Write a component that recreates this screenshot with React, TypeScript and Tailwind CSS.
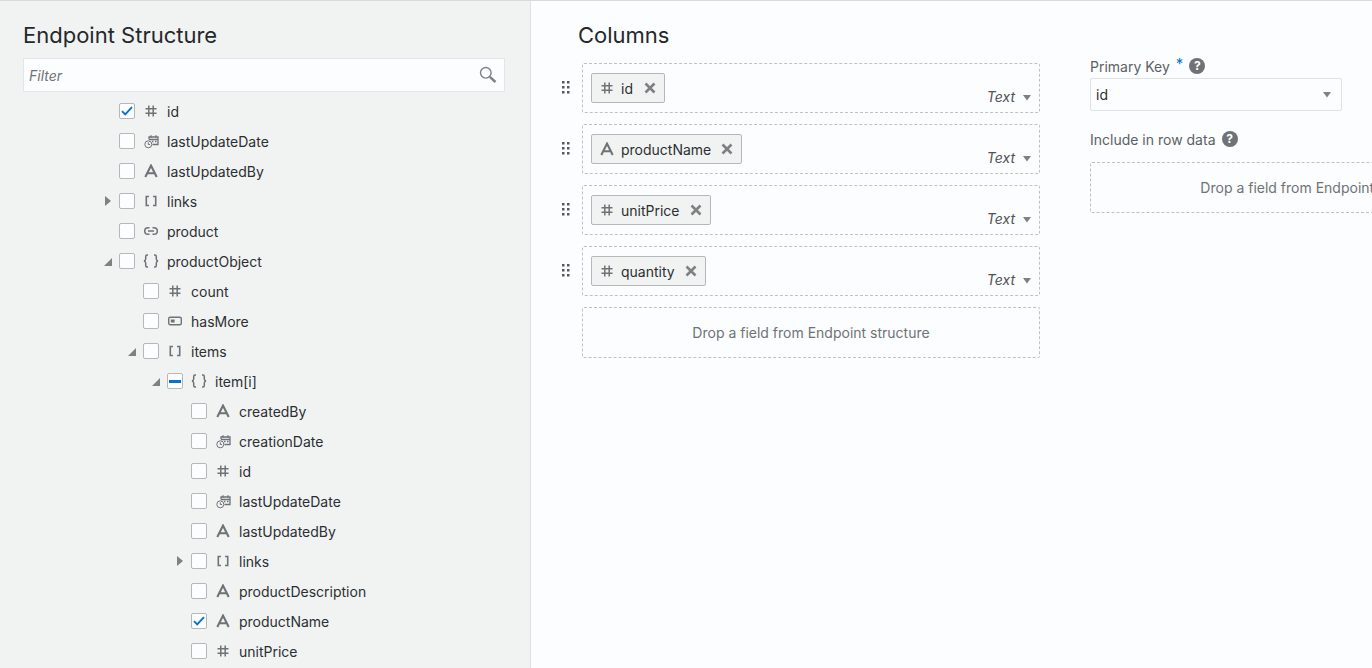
import React from "react";

type Kind = "hash" | "date" | "text" | "array" | "link" | "object" | "bool";

function FieldIcon({ kind }: { kind: Kind }) {
  const c = "#6f7376";
  if (kind === "hash")
    return (
      <svg width="14" height="14" viewBox="0 0 14 14" fill="none" stroke={c} strokeWidth="1.5">
        <path d="M4.8 1.5v11M9.2 1.5v11M1.5 4.8h11M1.5 9.2h11" />
      </svg>
    );
  if (kind === "text")
    return (
      <svg width="14" height="14" viewBox="0 0 14 14" fill="none" stroke={c} strokeWidth="2.1">
        <path d="M1.3 13 7 1.6 12.7 13M3.4 9.3h7.2" />
      </svg>
    );
  if (kind === "array")
    return (
      <svg width="14" height="14" viewBox="0 0 14 14" fill="none" stroke={c} strokeWidth="1.6">
        <path d="M5 2.5H2.3v9H5M9 2.5h2.7v9H9" />
      </svg>
    );
  if (kind === "object")
    return (
      <svg width="16" height="14" viewBox="0 0 16 14" fill="none" stroke={c} strokeWidth="1.5">
        <path d="M5 1H4C3 1 2.7 1.700 2.7 2.500V5C2.700 6 2 6.800 1 7c1 .2 1.700 1 1.700 2v2.500C2.700 12.300 3 13 4 13h1M11 1h1c1 0 1.300.7 1.300 1.500V5c0 1 .7 1.800 1.700 2-1 .2-1.700 1-1.700 2v2.500c0 .8-.3 1.500-1.300 1.500h-1" />
      </svg>
    );
  if (kind === "link")
    return (
      <svg width="14" height="14" viewBox="0 0 14 14" fill="none" stroke={c} strokeWidth="1.5">
        <path d="M5.500 3.700H4a3.300 3.300 0 0 0 0 6.600h1.500M8.500 3.700H10a3.300 3.300 0 0 1 0 6.600H8.500M4 7h6" />
      </svg>
    );
  if (kind === "bool")
    return (
      <svg width="14" height="14" viewBox="0 0 14 14" fill="none">
        <rect x="0.700" y="3.200" width="12.600" height="7.600" rx="1.500" stroke={c} strokeWidth="1.400" />
        <rect x="2.800" y="5.500" width="3.800" height="3" fill={c} />
      </svg>
    );
  return (
    <svg width="15" height="15" viewBox="0 0 15 15" fill="none" stroke={c} strokeWidth="1">
      <circle cx="4.300" cy="10.300" r="3.500" />
      <path d="M4.300 8.300v2.200h1.700" />
      <path d="M5 5.200V3h9v7.500H8.500M5 5.500h9" strokeWidth="1.300" />
      <path d="M7 1.200v2.300M12 1.200v2.300M8 7.500h1.500M11 7.500h1.500" strokeWidth="1.300" />
    </svg>
  );
}

function Row({
  indent,
  caret,
  state,
  kind,
  label,
}: {
  indent: number;
  caret?: "open" | "closed";
  state?: "checked" | "mixed";
  kind: Kind;
  label: string;
}) {
  return (
    <div className="flex h-[30px] items-center" style={{ paddingLeft: 119 + indent * 24 - 16 }}>
      <span className="flex w-[16px] justify-start">
        {caret === "closed" && (
          <svg width="8" height="12" viewBox="0 0 8 12">
            <path d="M2 1l6 5-6 5z" fill="#7d8184" />
          </svg>
        )}
        {caret === "open" && (
          <svg width="10" height="10" viewBox="0 0 10 10" className="mt-[2px]">
            <path d="M1 9l8-8v8z" fill="#7d8184" />
          </svg>
        )}
      </span>
      <span className="flex h-[16px] w-[16px] items-center justify-center rounded-[2px] border border-[#b5b8ba] bg-[#fcfdfe]">
        {state === "checked" && (
          <svg width="12" height="10" viewBox="0 0 12 10" fill="none" stroke="#0572ce" strokeWidth="1.900">
            <path d="M1 5.200 4.200 8.400 11 1.200" />
          </svg>
        )}
        {state === "mixed" && <span className="h-[3px] w-[12px] bg-[#0572ce]" />}
      </span>
      <span className="ml-[8px] flex w-[16px] justify-center">
        <FieldIcon kind={kind} />
      </span>
      <span className="ml-[8px] text-[14px] text-[#2c2f31]">{label}</span>
    </div>
  );
}

function Chip({ kind, label, width }: { kind: Kind; label: string; width: number }) {
  return (
    <div
      className="flex h-[30px] items-center rounded-[2px] border border-[#b5b8ba] bg-[#f1f3f3] pl-[8px]"
      style={{ width }}
    >
      <span className="flex w-[14px] justify-center">
        <FieldIcon kind={kind} />
      </span>
      <span className="ml-[7px] text-[14px] text-[#2c2f31]">{label}</span>
      <svg width="12" height="12" viewBox="0 0 12 12" fill="none" stroke="#7d8184" strokeWidth="2.600" className="ml-auto mr-[8px]">
        <path d="M1.500 1.500l9 9M10.500 1.500l-9 9" />
      </svg>
    </div>
  );
}

function Grip() {
  return (
    <svg width="8" height="14" viewBox="0 0 8 14" fill="#55595c">
      {[1, 6, 11].map((y) => (
        <React.Fragment key={y}>
          <rect x="0" y={y} width="2.500" height="2.500" />
          <rect x="5" y={y} width="2.500" height="2.500" />
        </React.Fragment>
      ))}
    </svg>
  );
}

function ColumnRow({ kind, label, width }: { kind: Kind; label: string; width: number }) {
  return (
    <div className="flex items-start">
      <span className="ml-[31px] mt-[17px] flex h-[14px] w-[20px]">
        <Grip />
      </span>
      <div className="relative h-[50px] w-[458px] rounded-[2px] border border-dashed border-[#bfc2c4] pl-[8px] pt-[9px]">
        <Chip kind={kind} label={label} width={width} />
        <div className="absolute bottom-[7px] right-[7px] flex items-center">
          <span className="text-[14px] italic leading-[16px] text-[#4f5356]">Text</span>
          <svg width="10" height="6" viewBox="0 0 10 6" className="ml-[7px] mt-[2px]">
            <path d="M1 0h8L5 5.500z" fill="#7d8184" />
          </svg>
        </div>
      </div>
    </div>
  );
}

function Help() {
  return (
    <span className="ml-[6px] flex h-[16px] w-[16px] items-center justify-center rounded-full bg-[#6f7376] text-[12px] font-bold leading-none text-white">
      ?
    </span>
  );
}

export default function App() {
  return (
    <div
      className="flex h-[668px] w-[1372px] overflow-hidden border-t border-[#d8dadb] bg-[#fcfdfe]"
      style={{ fontFamily: "Inter, 'Noto Sans', sans-serif" }}
    >
      <aside className="flex w-[531px] shrink-0 flex-col border-r border-[#dfe1e2] bg-[#f1f3f3] pl-[23px] pr-[25px]">
        <h2 className="mt-[20px] text-[22px] leading-[28px] text-[#25282a]">Endpoint Structure</h2>
        <div className="mt-[9px] flex h-[34px] items-center justify-between border border-[#e3e5e6] bg-[#fcfdfe] pl-[5px] pr-[7px]">
          <span className="text-[14px] italic text-[#6f7376]">Filter</span>
          <svg width="18" height="18" viewBox="0 0 18 18" fill="none" stroke="#7d8184">
            <circle cx="6.800" cy="6.800" r="5.300" strokeWidth="1.400" />
            <path d="M10.800 10.800 16.500 16" strokeWidth="2.400" />
          </svg>
        </div>
        <div className="-ml-[23px] mt-[4px]">
          <Row indent={0} state="checked" kind="hash" label="id" />
          <Row indent={0} kind="date" label="lastUpdateDate" />
          <Row indent={0} kind="text" label="lastUpdatedBy" />
          <Row indent={0} caret="closed" kind="array" label="links" />
          <Row indent={0} kind="link" label="product" />
          <Row indent={0} caret="open" kind="object" label="productObject" />
          <Row indent={1} kind="hash" label="count" />
          <Row indent={1} kind="bool" label="hasMore" />
          <Row indent={1} caret="open" kind="array" label="items" />
          <Row indent={2} caret="open" state="mixed" kind="object" label="item[i]" />
          <Row indent={3} kind="text" label="createdBy" />
          <Row indent={3} kind="date" label="creationDate" />
          <Row indent={3} kind="hash" label="id" />
          <Row indent={3} kind="date" label="lastUpdateDate" />
          <Row indent={3} kind="text" label="lastUpdatedBy" />
          <Row indent={3} caret="closed" kind="array" label="links" />
          <Row indent={3} kind="text" label="productDescription" />
          <Row indent={3} state="checked" kind="text" label="productName" />
          <Row indent={3} kind="hash" label="unitPrice" />
        </div>
      </aside>

      <main className="flex min-w-0 flex-1">
        <section className="w-[559px] shrink-0">
          <h2 className="ml-[47px] mt-[20px] text-[22px] leading-[28px] text-[#25282a]">Columns</h2>
          <div className="mt-[14px] flex flex-col gap-[11px]">
            <ColumnRow kind="hash" label="id" width={74} />
            <ColumnRow kind="text" label="productName" width={151} />
            <ColumnRow kind="hash" label="unitPrice" width={120} />
            <ColumnRow kind="hash" label="quantity" width={115} />
            <div className="ml-[51px] flex h-[51px] w-[458px] items-center justify-center rounded-[2px] border border-dashed border-[#bfc2c4] text-[14px] text-[#6f7376]">
              Drop a field from Endpoint structure
            </div>
          </div>
        </section>
        <section className="min-w-0 flex-1 overflow-hidden">
          <div className="mt-[56px] flex h-[18px] items-center text-[14px] text-[#5d6164]">
            Primary Key
            <span className="relative -top-[3px] ml-[6px] text-[15px] leading-none text-[#0572ce]">*</span>
            <Help />
          </div>
          <div className="mt-[3px] flex h-[33px] w-[252px] items-center justify-between rounded-[2px] border border-[#dfe1e2] pl-[5px] pr-[9px] text-[14px] text-[#2c2f31]">
            id
            <svg width="10" height="6" viewBox="0 0 10 6">
              <path d="M1 0h8L5 5.500z" fill="#7d8184" />
            </svg>
          </div>
          <div className="mt-[19px] flex h-[18px] items-center text-[14px] text-[#5d6164]">
            Include in row data
            <Help />
          </div>
          <div className="mt-[14px] flex h-[51px] w-[458px] items-center justify-center rounded-[2px] border border-dashed border-[#bfc2c4] text-[14px] text-[#6f7376]">
            Drop a field from Endpoint structure
          </div>
        </section>
      </main>
    </div>
  );
}
